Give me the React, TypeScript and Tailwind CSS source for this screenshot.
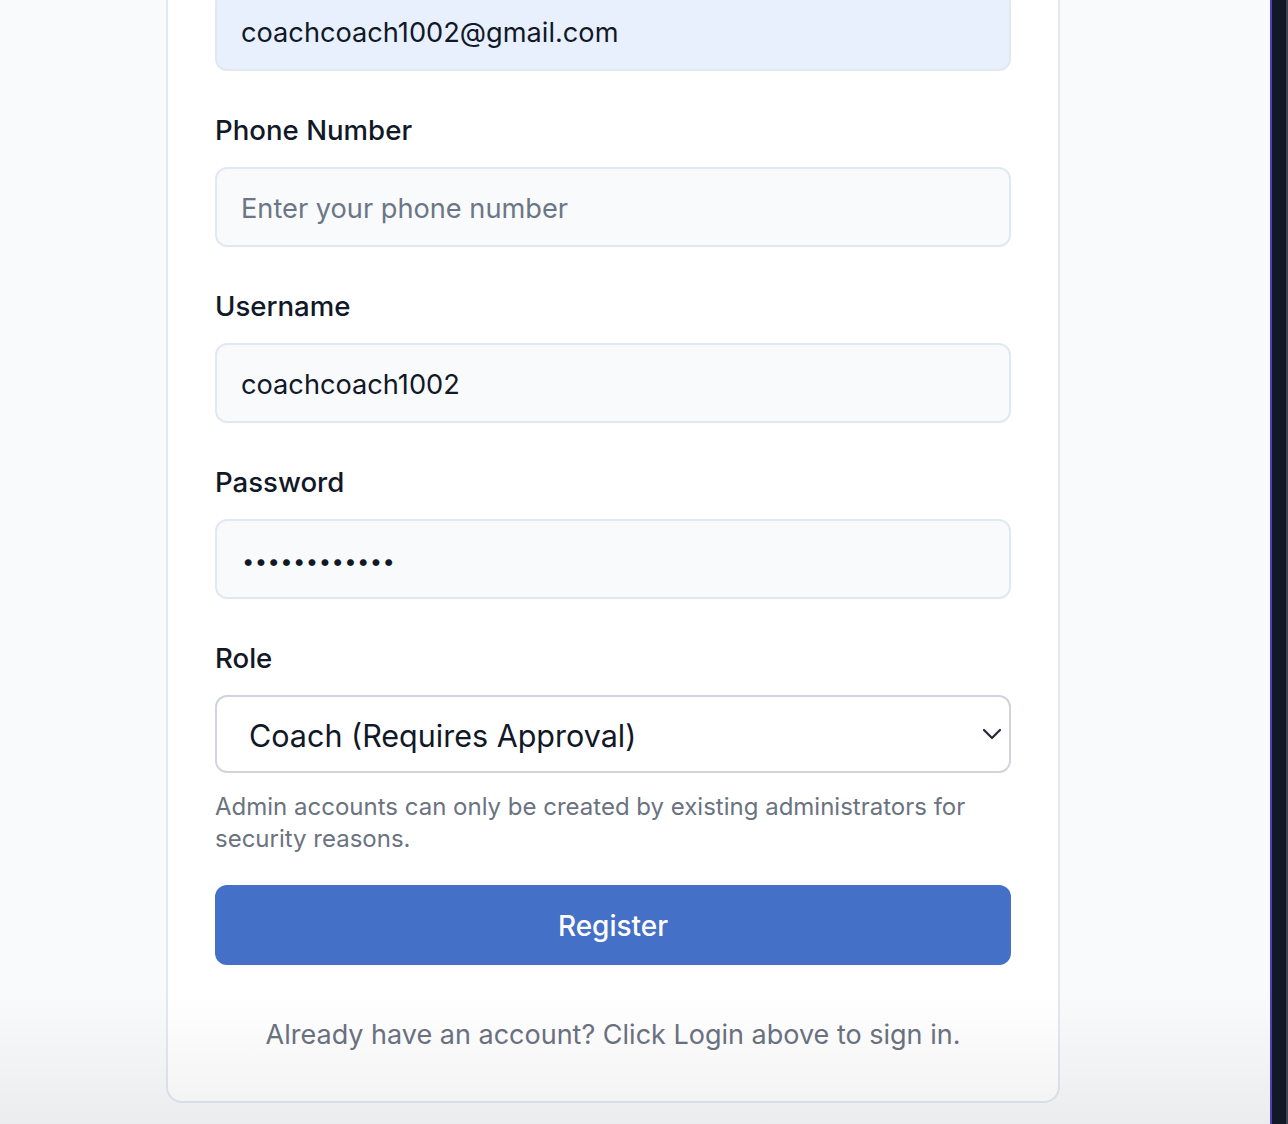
import React from "react";

const font = { fontFamily: "Inter, 'Noto Sans', sans-serif" };

function Label({ children }: { children: React.ReactNode }) {
  return (
    <div className="mt-[39px] mb-[17px] h-[40px] text-[27.6px] leading-[40px] font-medium text-[#111827]">
      {children}
    </div>
  );
}

function Field({ children, className = "" }: { children: React.ReactNode; className?: string }) {
  return (
    <div
      className={`h-[80px] rounded-[12px] border-2 border-[#e2e8f0] px-[24px] pt-[4px] flex items-center text-[27.2px] ${className}`}
    >
      {children}
    </div>
  );
}

export default function App() {
  return (
    <div style={font} className="relative h-[1124px] w-[1288px] overflow-hidden bg-[#f8fafc] flex">
      <div className="flex-1 relative">
        <div className="ml-[166px] w-[894px] -mt-[9px] bg-white border-2 border-t-0 border-[#e2e8f0] rounded-b-[16px] px-[47px] pb-[48px]">
          <Field className="bg-[#e8f0fe] border-[#e0e7f1]">
            <span className="text-[#111827]">coachcoach1002@gmail.com</span>
          </Field>

          <Label>Phone Number</Label>
          <Field className="bg-[#f8fafc]">
            <span className="text-[#6b7686]">Enter your phone number</span>
          </Field>

          <Label>Username</Label>
          <Field className="bg-[#f8fafc]">
            <span className="text-[#111827]">coachcoach1002</span>
          </Field>

          <Label>Password</Label>
          <Field className="bg-[#f8fafc]">
            <span className="text-[22px] tracking-[0.4px] pl-[1px] text-[#111827]">••••••••••••</span>
          </Field>

          <Label>Role</Label>
          <div className="h-[78px] rounded-[12px] border-2 border-[#d1d5db] bg-white pl-[32px] pr-[6px] pt-[3px] flex items-center justify-between text-[30.5px] text-[#111827]">
            <span>Coach (Requires Approval)</span>
            <svg width="20" height="12" viewBox="0 0 20 12" className="mr-[1px] -mt-[3px]">
              <path d="M2 2 L10 10 L18 2" fill="none" stroke="#1f2937" strokeWidth="2.2" strokeLinecap="round" strokeLinejoin="round" />
            </svg>
          </div>
          <p className="mt-[18px] text-[24px] leading-[32px] text-[#6b7280]">
            Admin accounts can only be created by existing administrators for security reasons.
          </p>

          <button className="mt-[30px] w-full h-[80px] pt-[2px] rounded-[12px] bg-[#4470c7] text-white text-[28px] font-medium">
            Register
          </button>

          <p className="mt-[48px] h-[40px] leading-[40px] pt-[2px] text-center text-[27px] text-[#6b7280]">
            Already have an account? Click Login above to sign in.
          </p>
        </div>
      </div>
      <div className="w-[2px] bg-[#4f3fb0]" />
      <div className="w-[14px] bg-[#111827]" />
      <div className="w-[2px] bg-[#3f4350]" />
      <div className="pointer-events-none absolute left-0 right-[18px] bottom-0 h-[130px] bg-gradient-to-b from-transparent to-[rgba(0,0,0,0.055)]" />
    </div>
  );
}
